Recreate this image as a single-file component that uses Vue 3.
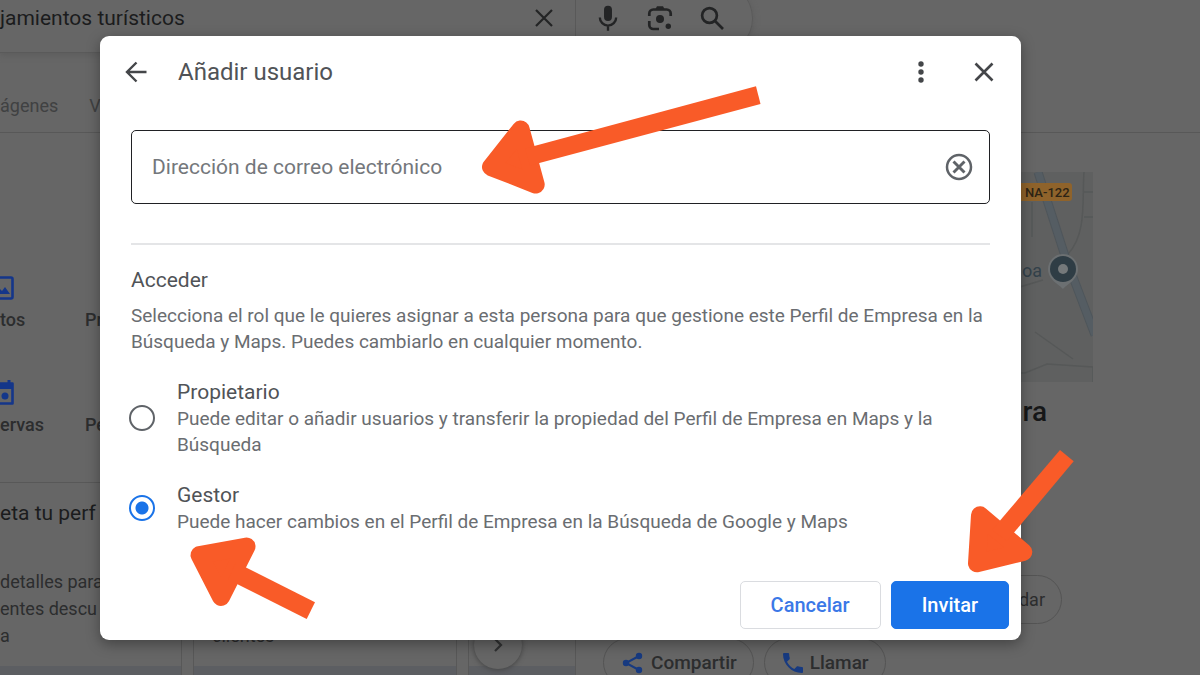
<script setup>
import { ref } from 'vue'

const email = ref('')
const role = ref('gestor')
const query = ref('jamientos turísticos')

const roles = [
  {
    id: 'propietario',
    name: 'Propietario',
    text: 'Puede editar o añadir usuarios y transferir la propiedad del Perfil de Empresa en Maps y la Búsqueda',
  },
  {
    id: 'gestor',
    name: 'Gestor',
    text: 'Puede hacer cambios en el Perfil de Empresa en la Búsqueda de Google y Maps',
  },
]
</script>

<template>
  <div class="screen">
    <div class="page">
      <header class="top">
        <form class="search" @submit.prevent>
          <input v-model="query" class="query" type="text" aria-label="Buscar" />
          <button class="plain clear" type="button" aria-label="Borrar">
            <svg width="24" height="24" viewBox="0 0 24 24"><path d="M4 4 20 20M20 4 4 20" fill="none" stroke="#232425" stroke-width="2.2" /></svg>
          </button>
          <div class="tools">
            <button class="plain" type="button" aria-label="Buscar por voz">
              <svg width="28" height="28" viewBox="0 0 24 24" fill="#232425"><rect x="8.6" y="1.6" width="6.8" height="13" rx="3.4" /><path d="M5 11.5a7 7 0 0 0 14 0M12 18.5V23" fill="none" stroke="#232425" stroke-width="2" /></svg>
            </button>
            <button class="plain" type="button" aria-label="Buscar por imagen">
              <svg width="28" height="28" viewBox="0 0 28 28" fill="none" stroke="#232425" stroke-width="2.7"><path d="M3.3 12V9.500a4 4 0 0 1 4-4h13.400a4 4 0 0 1 4 4V12M3.300 17v4a4 4 0 0 0 4 4H13" /><path d="M9.500 5 11 2.200h6L18.500 5z" fill="#232425" stroke="none" /><circle cx="14" cy="15" r="4" fill="#232425" stroke="none" /><circle cx="22.300" cy="22.300" r="2.700" fill="#232425" stroke="none" /></svg>
            </button>
            <button class="plain" type="submit" aria-label="Buscar">
              <svg width="28" height="28" viewBox="0 0 28 28" fill="none" stroke="#232425" stroke-width="2.700"><circle cx="11.500" cy="11.500" r="7.400" /><path d="m17 17 8 8" /></svg>
            </button>
          </div>
        </form>
        <nav class="tabs">
          <a href="#">ágenes</a>
          <a href="#">V</a>
        </nav>
      </header>

      <main class="columns">
        <section class="profile">
          <div class="actions">
            <a class="action" href="#">
              <svg width="28" height="28" viewBox="0 0 28 28"><rect x="2.500" y="3.500" width="22" height="21" rx="1.500" fill="none" stroke="#14368a" stroke-width="2.600" /><path d="m8 20 4-5 2 2 3-4 5 7z" fill="#14368a" /></svg>
              <span>tos</span>
            </a>
            <a class="action" href="#"><span>Pr</span></a>
            <a class="action" href="#">
              <svg width="28" height="28" viewBox="0 0 28 28"><path d="M7 1v4M21 1v4" stroke="#14368a" stroke-width="3" /><path d="M2.500 4.500h22v20h-22z" fill="none" stroke="#14368a" stroke-width="2.600" stroke-linejoin="round" /><path d="M2 4h23v6H2z" fill="#14368a" /><circle cx="17" cy="17" r="3.500" fill="#14368a" /></svg>
              <span>ervas</span>
            </a>
            <a class="action" href="#"><span>Pe</span></a>
          </div>
          <div class="tips">
            <h2>eta tu perf</h2>
            <div class="cards">
              <article class="card first"><p>detalles para<br />entes descu<br />a</p></article>
              <article class="card"><p><br /><br />clientes</p></article>
              <article class="card last"></article>
            </div>
            <button class="next" type="button" aria-label="Siguiente">
              <svg width="24" height="24" viewBox="0 0 24 24"><path d="m9 6 6 6-6 6" fill="none" stroke="#303132" stroke-width="2.200" /></svg>
            </button>
          </div>
        </section>

        <aside class="place">
          <svg class="map" width="90" height="210" viewBox="0 0 90 210">
            <path d="M0 0h90v210H0z" fill="#5f6060" />
            <path d="M29 30v35M81 0c-2 28 3 62-16 82M0 120l40-12M32 160l38 27M0 201h22l22-9 46 3v15M81 20h9M81 45h9" fill="none" stroke="#565858" stroke-width="1.500" />
            <path d="M35 0 62 84 92 163" fill="none" stroke="#4f565b" stroke-width="9" />
            <path d="M35 0 62 84 92 163" fill="none" stroke="#555d63" stroke-width="7" />
            <rect x="15" y="11" width="54" height="18" rx="3" fill="#8f632b" />
            <text x="22" y="25" class="road">NA-122</text>
            <text x="19" y="105" class="town">oa</text>
            <path d="M60 117c-3-4-15-9-15-20a15 15 0 0 1 30 0c0 11-12 16-15 20z" fill="#6c7072" />
            <circle cx="60" cy="97" r="13" fill="#2f3d45" />
            <circle cx="60" cy="97" r="5" fill="#75797b" />
          </svg>
          <h1>ra</h1>
          <div class="chips end">
            <button class="chip" type="button">dar</button>
          </div>
          <div class="chips">
            <button class="chip" type="button">
              <svg width="22" height="22" viewBox="0 0 22 22" fill="#173a80"><path d="M17 4 4 11l13 7" fill="none" stroke="#173a80" stroke-width="2" /><circle cx="17" cy="4" r="3.200" /><circle cx="4" cy="11" r="3.200" /><circle cx="17" cy="18" r="3.200" /></svg>
              Compartir
            </button>
            <button class="chip" type="button">
              <svg width="20" height="20" viewBox="3 3 18 18" fill="#173a80"><path d="M6.600 10.800c1.400 2.800 3.800 5.100 6.600 6.600l2.200-2.200c.3-.3.700-.4 1-.2 1.100.4 2.300.6 3.600.6.600 0 1 .4 1 1V20c0 .6-.4 1-1 1C10.600 21 3 13.400 3 4c0-.6.500-1 1-1h3.500c.6 0 1 .4 1 1 0 1.300.2 2.500.6 3.600.1.300 0 .7-.2 1z" /></svg>
              Llamar
            </button>
          </div>
        </aside>
      </main>
    </div>

    <div class="overlay">
      <form class="dialog" role="dialog" aria-labelledby="dialog-title" @submit.prevent>
        <header class="bar">
          <button class="plain" type="button" aria-label="Atrás">
            <svg width="24" height="24" viewBox="0 0 24 24" fill="none" stroke="#444649" stroke-width="2.400"><path d="M22.500 12H3M12.500 2.500 3 12l9.500 9.500" /></svg>
          </button>
          <h2 id="dialog-title">Añadir usuario</h2>
          <button class="plain" type="button" aria-label="Más opciones">
            <svg width="24" height="24" viewBox="0 0 24 24" fill="#444649"><circle cx="12" cy="4" r="2.700" /><circle cx="12" cy="12" r="2.700" /><circle cx="12" cy="20" r="2.700" /></svg>
          </button>
          <button class="plain" type="button" aria-label="Cerrar">
            <svg width="24" height="24" viewBox="0 0 24 24"><path d="m3.500 3.500 17 17m0-17-17 17" fill="none" stroke="#444649" stroke-width="2.600" /></svg>
          </button>
        </header>

        <div class="content">
          <div class="field">
            <input v-model="email" type="email" placeholder="Dirección de correo electrónico" aria-label="Dirección de correo electrónico" />
            <button class="plain" type="button" aria-label="Borrar texto" @click="email = ''">
              <svg width="28" height="28" viewBox="0 0 28 28" fill="none" stroke="#5f6368" stroke-width="2.500"><circle cx="14" cy="14" r="12" /><path d="m8.500 8.500 11 11m0-11-11 11" stroke-width="2.900" /></svg>
            </button>
          </div>
          <hr />
          <fieldset>
            <legend>Acceder</legend>
            <p class="intro">Selecciona el rol que le quieres asignar a esta persona para que gestione este Perfil de Empresa en la Búsqueda y Maps. Puedes cambiarlo en cualquier momento.</p>
            <label v-for="item in roles" :key="item.id" class="role">
              <input v-model="role" type="radio" name="role" :value="item.id" />
              <span class="about">
                <span class="name">{{ item.name }}</span>
                <span class="text">{{ item.text }}</span>
              </span>
            </label>
          </fieldset>
        </div>

        <footer class="buttons">
          <button class="btn" type="button">Cancelar</button>
          <button class="btn primary" type="submit">Invitar</button>
        </footer>
      </form>
    </div>

    <svg class="arrows" viewBox="0 0 1200 675" preserveAspectRatio="xMinYMin meet" aria-hidden="true">
      <g fill="#f95b28" stroke="#f95b28" stroke-width="18" stroke-linejoin="round">
        <path d="M491 167 520.700 129.500 535.700 184.500z" />
        <path d="M199.500 555 246.500 546.500 221 597z" />
        <path d="M980 515.300 1023.300 552 977 563.300z" />
      </g>
      <g fill="#f95b28">
        <path d="M756 86.300 760.500 104 530 165.500 525 148.500z" />
        <path d="M315 602.300 306.700 619 228 579.500 236 562.500z" />
        <path d="M1060 450 1073.700 461.300 1007 541 992 530z" />
      </g>
    </svg>
  </div>
</template>

<style>
body {
  margin: 0;
  background: #666;
}
</style>

<style scoped>
* {
  box-sizing: border-box;
}
.screen {
  position: relative;
  height: 100vh;
  overflow: hidden;
  background: #666;
  color: #2c2d2e;
  font-family: Roboto, "Liberation Sans", sans-serif;
  font-size: 18px;
}
a {
  color: inherit;
  text-decoration: none;
}
button,
input {
  font: inherit;
  color: inherit;
}
h1,
h2,
p {
  margin: 0;
}
.plain {
  display: flex;
  padding: 0;
  border: 0;
  background: none;
}
.top {
  display: flex;
  flex-direction: column;
  height: 133px;
  border-bottom: 1px solid #585858;
}
.search {
  display: flex;
  flex: none;
  align-items: center;
  width: 753px;
  height: 69px;
  margin-top: -16px;
  border: solid #5a5a5a;
  border-width: 0 1px 1px 0;
  border-radius: 0 34px 34px 0;
  box-shadow: 0 2px 6px #5c5c5c;
}
.query {
  flex: 1;
  min-width: 0;
  padding: 0;
  border: 0;
  outline: 0;
  background: none;
  color: #1b1c1d;
  font-size: 21px;
}
.clear {
  margin-right: 19px;
}
.tools {
  display: flex;
  align-items: center;
  gap: 24px;
  align-self: stretch;
  padding: 0 26px 0 18px;
  border-left: 1px solid #595959;
}
.tabs {
  display: flex;
  gap: 31px;
  padding-top: 41px;
  color: #404142;
  line-height: 24px;
}
.columns {
  display: grid;
  grid-template-columns: 576px 490px;
  gap: 27px;
}
.actions {
  display: grid;
  grid-template-columns: 85px 1fr;
  gap: 25px 0;
  padding: 139px 0 25px;
}
.action {
  display: flex;
  flex-direction: column;
  align-items: flex-start;
  justify-content: flex-end;
  gap: 6px;
  height: 80px;
  padding-bottom: 20px;
  font-weight: 500;
  line-height: 24px;
}
.action svg {
  margin-left: -12px;
}
.tips {
  position: relative;
  height: 260px;
  border: solid #585858;
  border-width: 1px 1px 0 0;
}
.tips h2 {
  padding-top: 16px;
  color: #1b1c1d;
  font-size: 21px;
  font-weight: 400;
  line-height: 28px;
}
.cards {
  display: grid;
  grid-template-columns: 182px 264px 1fr;
  gap: 11px;
  margin-top: 14px;
}
.card {
  height: 200px;
  border: solid #585858;
  border-width: 0 1px;
  background: linear-gradient(#666 125px, #5c5e62 125px);
}
.card p {
  padding: 27px 0 0 18px;
  line-height: 27px;
}
.first {
  border-left: 0;
}
.first p {
  padding-left: 0;
}
.last {
  border-right: 0;
}
.next {
  position: absolute;
  right: 53px;
  top: 138px;
  display: grid;
  place-items: center;
  width: 48px;
  height: 48px;
  padding: 0;
  border: 0;
  border-radius: 50%;
  background: #666;
  box-shadow: 0 1px 5px #444;
}
.place {
  padding-top: 39px;
}
.map {
  display: block;
  margin-left: auto;
}
.road {
  fill: #2d2415;
  font-size: 13px;
  font-weight: 500;
}
.town {
  fill: #33414a;
  font-size: 18px;
}
.place h1 {
  width: 444px;
  margin-top: 14px;
  color: #161718;
  font-size: 28px;
  font-weight: 500;
  line-height: 32px;
  text-align: right;
}
.chips {
  display: flex;
  gap: 10px;
  margin-top: 14px;
}
.chips.end {
  justify-content: flex-end;
  margin: 147px 31px 0 0;
}
.chip {
  display: flex;
  align-items: center;
  gap: 7px;
  height: 49px;
  padding: 0 16px 0 18px;
  border: 1px solid #545454;
  border-radius: 25px;
  background: none;
  font-size: 19px;
  font-weight: 500;
}
.end .chip {
  padding-left: 60px;
  font-size: 18px;
  font-weight: 400;
}
.overlay {
  position: absolute;
  inset: 0;
  display: flex;
  align-items: center;
  justify-content: center;
  padding-right: 79px;
}
.dialog {
  width: 921px;
  border-radius: 9px;
  background: #fff;
  box-shadow: 0 4px 14px rgba(0, 0, 0, 0.35);
  color: #505357;
}
.bar {
  display: flex;
  align-items: center;
  height: 72px;
  padding: 0 25px 0 24px;
  gap: 39px;
}
.bar h2 {
  flex: 1;
  margin-left: -9px;
  font-size: 24px;
  font-weight: 400;
}
.content {
  padding: 22px 31px 0;
}
.field {
  display: flex;
  align-items: center;
  height: 74px;
  padding: 0 16px 0 20px;
  border: 1px solid #202124;
  border-radius: 5px;
}
.field input {
  flex: 1;
  min-width: 0;
  padding: 0;
  border: 0;
  outline: 0;
  background: none;
  font-size: 21px;
}
.field input::placeholder {
  color: #74777b;
  opacity: 1;
}
hr {
  height: 2px;
  margin: 39px 0 21px;
  border: 0;
  background: #e4e5e7;
}
fieldset {
  margin: 0;
  padding: 0;
  border: 0;
}
legend {
  padding: 0;
  font-size: 21px;
  line-height: 28px;
}
.intro {
  margin-top: 9px;
  color: #6a6d71;
  font-size: 19px;
  line-height: 26px;
}
.role {
  display: flex;
  align-items: center;
  gap: 22px;
  margin-top: 24px;
}
.role input {
  appearance: none;
  flex: none;
  width: 26px;
  height: 26px;
  margin: 0 0 0 -2px;
  border: 2px solid #5f6368;
  border-radius: 50%;
}
.role input:checked {
  border-color: #1a73e8;
  background: radial-gradient(circle, #1a73e8 6px, #fff 7px);
}
.about {
  display: flex;
  flex-direction: column;
}
.name {
  font-size: 21px;
  line-height: 27px;
}
.text {
  color: #6a6d71;
  font-size: 19px;
  line-height: 26px;
}
.buttons {
  display: flex;
  justify-content: flex-end;
  gap: 10px;
  padding: 46px 12px 11px;
}
.btn {
  height: 48px;
  padding: 0 30px;
  border: 1px solid #dadce0;
  border-radius: 5px;
  background: #fff;
  color: #3b78e7;
  font-size: 20px;
  font-weight: 500;
}
.primary {
  border-color: #1a73e8;
  background: #1a73e8;
  color: #fff;
}
.arrows {
  position: absolute;
  inset: 0;
  width: 100%;
  height: 100%;
  pointer-events: none;
}
</style>
